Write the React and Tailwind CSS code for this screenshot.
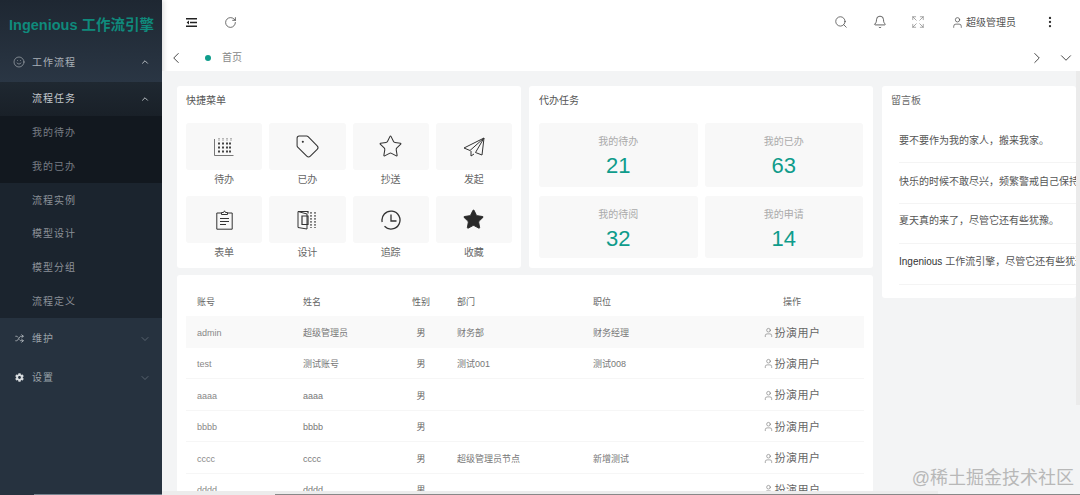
import React from "react";
import {
  ChevronDown, ChevronLeft, ChevronRight, ChevronUp, Bell, Search, User, EllipsisVertical,
  RotateCw, Smile, Tag, Star, Shuffle, Expand,
} from "lucide-react";
import { FaCog } from "react-icons/fa";

function IndentIcon() {
  return (
    <svg width="11" height="9" viewBox="0 0 11 9" fill="none" stroke="#222" strokeWidth="1.4">
      <path d="M0 .7h11M4 4.5h7M0 8.3h11" />
      <path d="M3 2.6 0.6 4.5 3 6.4z" fill="#222" stroke="none" />
    </svg>
  );
}
function GridIcon() {
  return (
    <svg width="20" height="18" viewBox="0 0 20 18" fill="none" stroke="#555" strokeWidth="0.8">
      <path d="M.5 1v16.5H19.5" />
      <path d="M5 0v3M9 0v3M13 0v3M17 0v3" strokeDasharray="1.6 0.8" />
      <g fill="#444" stroke="none">
        {[4, 8, 12].map((y) => [4, 8, 12, 15].map((x) => <rect key={x + "-" + y} x={x} y={y + 0.5} width="2" height="2" />))}
      </g>
    </svg>
  );
}
function PlaneIcon() {
  return (
    <svg width="22" height="20" viewBox="0 0 22 20" fill="none" stroke="#333" strokeWidth="1" strokeLinejoin="round">
      <path d="M21 1 1 11l6 2.5L21 1 12.5 15.5 19 18z" />
      <path d="M8 14v5l3-2" />
    </svg>
  );
}
function ClipIcon() {
  return (
    <svg width="17" height="20" viewBox="0 0 17 20" fill="none" stroke="#333" strokeWidth="1">
      <path d="M5.5 3H.8v16.2h15.4V3h-4.7" />
      <path d="M5.5 4.5V2.5h2L8.5 .8l1 1.7h2v2zM4 8.5h9M4 11.5h9M4 14.5h6" />
    </svg>
  );
}
function DesignIcon() {
  return (
    <svg width="20" height="20" viewBox="0 0 20 20" fill="none" stroke="#333" strokeWidth="1">
      <path d="M10 4 1 1.5v16L10 19z" />
      <path d="M1 1.5h10v2M5 6h6v8.5H5z" strokeWidth="1.2" />
      <path d="M14 2v16M18 2v16" strokeDasharray="1.8 1.2" strokeWidth="1.2" />
    </svg>
  );
}
function ClockIcon() {
  return (
    <svg width="20" height="20" viewBox="0 0 20 20" fill="none" stroke="#333" strokeWidth="1.3">
      <path d="M1.2 12A9 9 0 1 1 3.5 16.3M6 18.2a9 9 0 0 0 1.5.5" />
      <path d="M10 4.5V11h5.5" />
    </svg>
  );
}

function SideSub({ children, dark }) {
  return (
    <div className={"flex h-[33.7px] items-center pl-[32px] text-[10px] tracking-[1px] " + (dark ? "bg-[#12181f] text-[#777d84]" : "text-[#8b9198]")}>
      {children}
    </div>
  );
}

function Sidebar() {
  return (
    <aside className="flex h-full w-[162px] shrink-0 flex-col bg-[#26323f] shadow-[2px_0_5px_rgba(0,0,0,0.12)]">
      <div className="h-[82px] bg-gradient-to-b from-[#1e2732] to-[#2a3644]">
        <div className="flex h-[42px] items-center pt-[8px] pl-[9px] text-[14.5px] leading-none font-bold whitespace-nowrap text-[#0f8a7c]">
          Ingenious 工作流引擎
        </div>
        <div className="flex h-[40px] items-center pr-[12px] pl-[13px] text-[10px] tracking-[1px] text-[#a9b0b7]">
          <Smile size={12} strokeWidth={1.1} className="mr-[7px] text-[#c4c9ce]" />
          <span>工作流程</span>
          <ChevronUp size={10} strokeWidth={2.2} className="ml-auto text-[#c4c9ce]" />
        </div>
      </div>
      <div className="bg-[#1b242e]">
        <div className="flex h-[33.8px] items-center bg-gradient-to-b from-[#1f2831] to-[#192028] pr-[12px] pl-[32px] text-[10px] tracking-[1px] text-[#c4c9ce]">
          <span>流程任务</span>
          <ChevronUp size={10} strokeWidth={2.2} className="ml-auto" />
        </div>
        <SideSub dark>我的待办</SideSub>
        <SideSub dark>我的已办</SideSub>
        <SideSub>流程实例</SideSub>
        <SideSub>模型设计</SideSub>
        <SideSub>模型分组</SideSub>
        <SideSub>流程定义</SideSub>
      </div>
      <div className="flex h-[40px] items-center pt-[2px] pr-[11px] pl-[15px] text-[10px] tracking-[1px] text-[#9ba2a9]">
        <Shuffle size={9} strokeWidth={2} className="mr-[8px] text-[#c4c9ce]" />
        <span>维护</span>
        <ChevronDown size={12} strokeWidth={1.2} className="ml-auto text-[#7b858f]" />
      </div>
      <div className="flex h-[38px] items-center pt-[2px] pr-[11px] pl-[15px] text-[10px] tracking-[1px] text-[#9ba2a9]">
        <FaCog size={9} className="mr-[8px] text-[#d8dcdf]" />
        <span>设置</span>
        <ChevronDown size={12} strokeWidth={1.2} className="ml-auto text-[#7b858f]" />
      </div>
    </aside>
  );
}

function Header() {
  return (
    <div className="flex h-[44px] items-center pr-[23px] pl-[24px]">
      <IndentIcon />
      <RotateCw size={13} strokeWidth={1.3} className="ml-[26.5px] text-[#333]" />
      <div className="ml-auto flex items-center text-[10px] text-[#555]">
        <Search size={14} strokeWidth={1.3} className="text-[#444]" />
        <Bell size={14} strokeWidth={1.3} className="ml-[25px] text-[#333]" />
        <Expand size={14} strokeWidth={1.1} className="ml-[24px] text-[#777]" />
        <User size={13} strokeWidth={1.3} className="ml-[25.5px] text-[#444]" />
        <span className="ml-[2.5px] w-[50px] whitespace-nowrap">超级管理员</span>
        <EllipsisVertical size={14} strokeWidth={2} className="ml-[27px] text-[#333]" />
      </div>
    </div>
  );
}

function TabBar() {
  return (
    <div className="flex h-[27px] items-center pr-[5px] pl-[5px]">
      <ChevronLeft size={18} strokeWidth={1.3} className="text-[#444]" />
      <span className="ml-[20px] h-[6px] w-[6px] rounded-full bg-[#0f9d8c]" />
      <span className="ml-[11px] text-[10px] text-[#888]">首页</span>
      <ChevronRight size={18} strokeWidth={1.3} className="ml-auto text-[#444]" />
      <ChevronDown size={18} strokeWidth={1.3} className="ml-[11px] text-[#444]" />
    </div>
  );
}

const quick = [
  ["待办", <GridIcon />], ["已办", <Tag size={25} strokeWidth={1} className="text-[#333]" />],
  ["抄送", <Star size={25} strokeWidth={1} className="text-[#333]" />], ["发起", <PlaneIcon />],
  ["表单", <ClipIcon />], ["设计", <DesignIcon />],
  ["追踪", <ClockIcon />], ["收藏", <Star size={23} strokeWidth={1} fill="#2a2a2a" className="text-[#2a2a2a]" />],
];

function QuickCard() {
  return (
    <section className="h-[182px] w-[344px] rounded-[3px] bg-white px-[9px]">
      <h2 className="flex h-[37px] items-center pb-[8px] text-[10px] text-[#555]">快捷菜单</h2>
      <div className="grid w-[326px] grid-cols-4 gap-x-[7px]">
        {quick.map(([label, icon]) => (
          <div key={label} className="h-[73px]">
            <div className="flex h-[47px] items-center justify-center rounded-[3px] bg-[#f8f8f8]">{icon}</div>
            <div className="flex h-[18px] items-center justify-center text-[10px] text-[#666]">{label}</div>
          </div>
        ))}
      </div>
    </section>
  );
}

const todo = [["我的待办", "21"], ["我的已办", "63"], ["我的待阅", "32"], ["我的申请", "14"]];

function TodoCard() {
  return (
    <section className="h-[182px] w-[344px] rounded-[3px] bg-white px-[10px]">
      <h2 className="flex h-[37px] items-center pb-[8px] text-[10px] text-[#555]">代办任务</h2>
      <div className="grid grid-cols-2 grid-rows-[64px_62px] gap-x-[7px] gap-y-[9px]">
        {todo.map(([label, n]) => (
          <div key={label} className="flex flex-col items-center rounded-[3px] bg-[#f8f8f8] pt-[12px]">
            <div className="text-[10px] leading-[14px] text-[#aaa]">{label}</div>
            <div className="mt-[3px] text-[22px] leading-[28px] text-[#0f9c8b]">{n}</div>
          </div>
        ))}
      </div>
    </section>
  );
}

const rows = [
  ["admin", "超级管理员", "男", "财务部", "财务经理"],
  ["test", "测试账号", "男", "测试001", "测试008"],
  ["aaaa", "aaaa", "男", "", ""],
  ["bbbb", "bbbb", "男", "", ""],
  ["cccc", "cccc", "男", "超级管理员节点", "新增测试"],
  ["dddd", "dddd", "男", "", ""],
];
const gridCols = "grid grid-cols-[106px_111px_36px_143px_138px_144px] items-center";

function TableCard() {
  return (
    <section className="min-h-0 flex-1 overflow-hidden rounded-t-[3px] bg-white px-[9px] pt-[11px]">
      <div className={gridCols + " h-[30px] pt-[4px] text-[9px] text-[#666]"}>
        <div className="pl-[11px]">账号</div>
        <div className="pl-[11px]">姓名</div>
        <div className="text-center">性别</div>
        <div className="pl-[18px]">部门</div>
        <div className="pl-[11px]">职位</div>
        <div className="text-center">操作</div>
      </div>
      {rows.map((r, i) => (
        <div key={r[0]} className={gridCols + " h-[31.5px] pt-[4px] text-[9px] text-[#888] " + (i === 0 ? "bg-[#f9f9f9]" : "border-b border-[#f6f6f6]")}>
          <div className="pl-[11px]">{r[0]}</div>
          <div className="pl-[11px] text-[#777]">{r[1]}</div>
          <div className="text-center text-[#666]">{r[2]}</div>
          <div className="pl-[18px] text-[#777]">{r[3]}</div>
          <div className="pl-[11px] text-[#777]">{r[4]}</div>
          <div className="-mt-[2px] flex items-center justify-center pr-[1px] text-[11px] tracking-[0.5px] text-[#666]">
            <User size={11} strokeWidth={1.2} className="mr-[1px]" />
            <span>扮演用户</span>
          </div>
        </div>
      ))}
    </section>
  );
}

const messages = [
  "要不要作为我的家人，搬来我家。",
  "快乐的时候不敢尽兴，频繁警戒自己保持清醒。",
  "夏天真的来了，尽管它还有些犹豫。",
];

function BoardCard() {
  const row = "border-b border-[#f4f4f4] text-[10px] leading-[20px] whitespace-nowrap text-[#555]";
  return (
    <section className="ml-[9px] h-[212px] w-[194px] shrink-0 overflow-hidden rounded-[3px] bg-white pl-[9px]">
      <h2 className="flex h-[28px] items-center text-[10px] text-[#666]">留言板</h2>
      <div className="pt-[8px] pl-[8px]">
        <div className={"h-[41px] pt-[9px] " + row}>{messages[0]}</div>
        <div className={"h-[41px] pt-[9px] " + row}>{messages[1]}</div>
        <div className={"h-[40px] pt-[7px] " + row}>{messages[2]}</div>
        <div className={"h-[41px] pt-[8px] " + row}>
          <span className="text-[#333]">Ingenious</span> 工作流引擎，尽管它还有些犹豫。
        </div>
      </div>
    </section>
  );
}

export default function App() {
  return (
    <div
      className="relative flex h-[495px] w-[1080px] overflow-hidden bg-white"
      style={{ fontFamily: '"Liberation Sans", "Noto Sans CJK SC", sans-serif' }}
    >
      <Sidebar />
      <main className="flex min-w-0 flex-1 flex-col">
        <Header />
        <TabBar />
        <div className="flex min-h-0 flex-1 items-start bg-[#f3f4f5] pt-[15px] pl-[15px]">
          <div className="flex h-[409px] w-[696px] shrink-0 flex-col gap-[7px]">
            <div className="flex justify-between">
              <QuickCard />
              <TodoCard />
            </div>
            <TableCard />
          </div>
          <BoardCard />
        </div>
      </main>
      <div className="absolute top-[71px] right-0 h-[334px] w-[4px] bg-[#ebebeb]" />
      <div className="absolute bottom-0 left-[162px] h-[4px] w-[776px] bg-[#ececec]" />
      <div className="absolute bottom-0 left-[34px] h-[1px] w-[128px] bg-[#76828e]" />
      <div className="absolute bottom-0 left-[275px] h-[1px] w-[805px] bg-[#888]" />
      <div className="absolute right-[6px] bottom-[8px] text-[18px] leading-none whitespace-nowrap text-[#b8b8b8]">
        @稀土掘金技术社区
      </div>
    </div>
  );
}
